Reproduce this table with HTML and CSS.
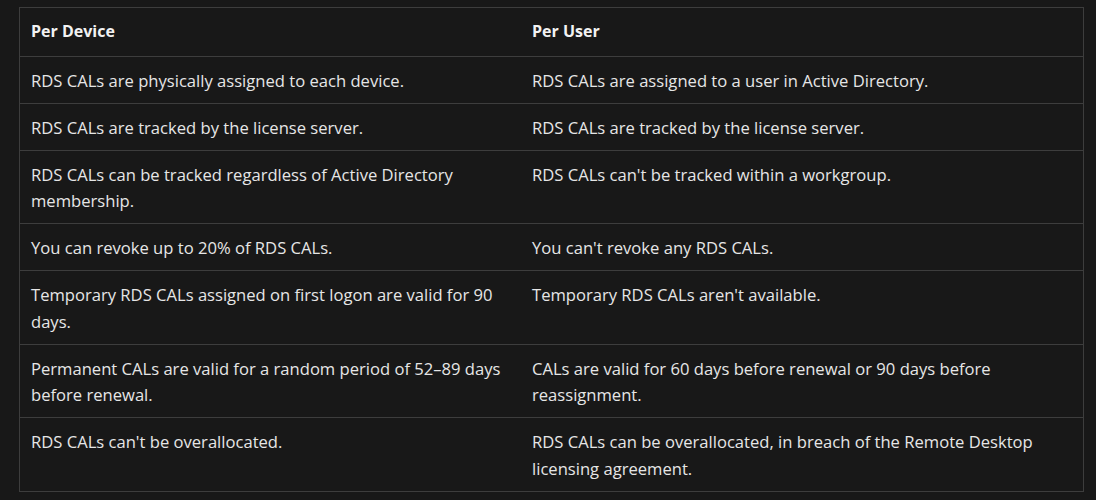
FILE: index.html
```html
<!DOCTYPE html>
<html lang="en">
<head>
<meta charset="utf-8">
<title>RDS CAL types</title>
<link rel="stylesheet" href="styles.css">
</head>
<body>
<table class="cal-table">
  <thead>
    <tr><th>Per Device</th><th>Per User</th></tr>
  </thead>
  <tbody>
    <tr><td>RDS CALs are physically assigned to each device.</td><td>RDS CALs are assigned to a user in Active Directory.</td></tr>
    <tr><td>RDS CALs are tracked by the license server.</td><td>RDS CALs are tracked by the license server.</td></tr>
    <tr><td>RDS CALs can be tracked regardless of Active Directory membership.</td><td>RDS CALs can't be tracked within a workgroup.</td></tr>
    <tr><td>You can revoke up to 20% of RDS CALs.</td><td>You can't revoke any RDS CALs.</td></tr>
    <tr><td>Temporary RDS CALs assigned on first logon are valid for 90 days.</td><td>Temporary RDS CALs aren't available.</td></tr>
    <tr><td>Permanent CALs are valid for a random period of 52–89 days before renewal.</td><td>CALs are valid for 60 days before renewal or 90 days before reassignment.</td></tr>
    <tr><td>RDS CALs can't be overallocated.</td><td>RDS CALs can be overallocated, in breach of the Remote Desktop licensing agreement.</td></tr>
  </tbody>
</table>
</body>
</html>
```
FILE: styles.css
```css
html, body {
  margin: 0;
  background: #181818;
}
body {
  padding: 7px 12px 0 19px;
  font-family: "Open Sans", "Noto Sans", sans-serif;
  font-size: 16.6px;
  color: #e6e6e6;
}
.cal-table {
  width: 1065px;
  border-collapse: collapse;
  border: 1px solid #3d3d3d;
  table-layout: fixed;
}
.cal-table th,
.cal-table td {
  text-align: left;
  vertical-align: top;
  padding: 10px 11px 10px 11px;
  line-height: 26.5px;
  border-top: 1px solid #3d3d3d;
}
.cal-table td {
  padding-top: 11px;
  padding-bottom: 8.5px;
}
.cal-table th {
  font-size: 16px;
  font-weight: 700;
  color: #f2f2f2;
  padding-bottom: 11px;
}
.cal-table th:first-child,
.cal-table td:first-child {
  width: 479px;
}
```
